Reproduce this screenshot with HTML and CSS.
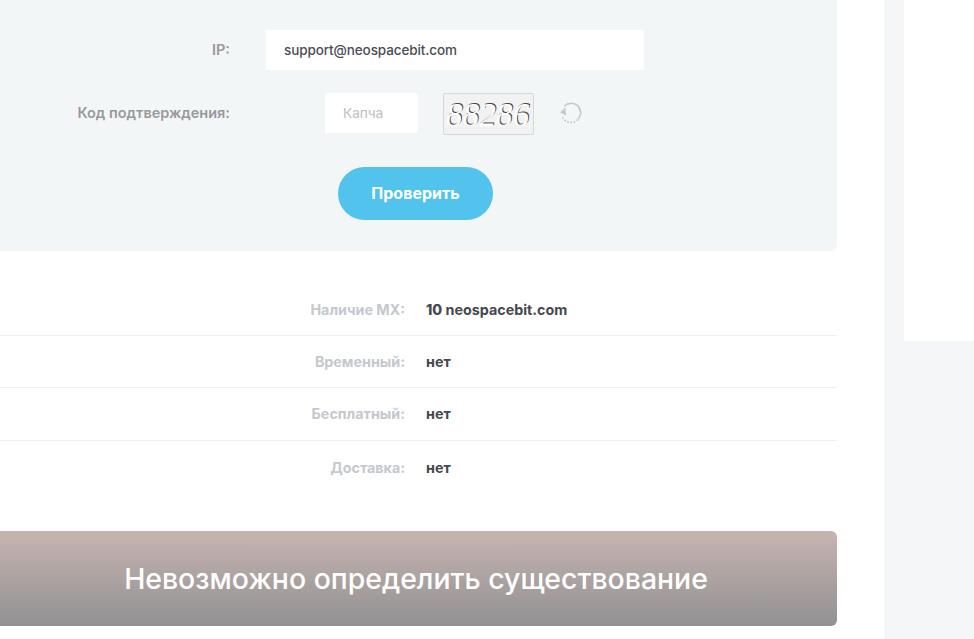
FILE: index.html
```html
<!DOCTYPE html>
<html lang="ru">
<head>
    <meta charset="UTF-8">
    <title>Проверка email</title>
    <link rel="stylesheet" href="styles.css">
</head>
<body>
    <div class="page">
        <main class="content">
            <form class="check-form">
                <div class="form-row">
                    <label class="form-label">IP:</label>
                    <div class="form-field">
                        <input class="text-input ip-input" type="text" value="support@neospacebit.com">
                    </div>
                </div>
                <div class="form-row captcha-row">
                    <label class="form-label">Код подтверждения:</label>
                    <div class="form-field captcha-field">
                        <input class="text-input captcha-input" type="text" placeholder="Капча">
                        <div class="captcha-img"><span>88286</span></div>
                        <svg class="refresh-icon" width="24" height="24" viewBox="0 0 24 24" fill="none">
                            <path d="M5.3 5.2A9.5 9.5 0 1 1 19 18.4" stroke="#c4c8cb" stroke-width="1.6"/>
                            <path d="M18.6 18.8A9.5 9.5 0 0 1 3 15" stroke="#b0b5b8" stroke-width="1.5" stroke-dasharray="1.2 2"/>
                            <path d="M6.2 6.6 1.2 11.6 7 14.6Z" fill="#c4c8cb"/>
                        </svg>
                    </div>
                </div>
                <div class="form-actions">
                    <button class="submit-btn" type="button">Проверить</button>
                </div>
            </form>

            <div class="result-table">
                <div class="result-row">
                    <span class="result-label">Наличие MX:</span>
                    <span class="result-value"><b>10</b> neospacebit.com</span>
                </div>
                <div class="result-row">
                    <span class="result-label">Временный:</span>
                    <span class="result-value">нет</span>
                </div>
                <div class="result-row">
                    <span class="result-label">Бесплатный:</span>
                    <span class="result-value">нет</span>
                </div>
                <div class="result-row">
                    <span class="result-label">Доставка:</span>
                    <span class="result-value">нет</span>
                </div>
            </div>

            <div class="status-banner">Невозможно определить существование</div>
        </main>
        <aside class="sidebar">
            <div class="widget"></div>
        </aside>
    </div>
</body>
</html>
```

FILE: styles.css
```css
html, body {
    margin: 0;
    height: 100%;
}
body {
    font-family: Inter, "Open Sans", sans-serif;
    background-color: #fff;
    overflow: hidden;
}
.page {
    display: flex;
    height: 639px;
}
.content {
    width: 837px;
    padding-right: 48px;
    flex-shrink: 0;
}
.check-form {
    height: 251px;
    box-sizing: border-box;
    padding-top: 30px;
    background-color: #f3f6f7;
    border-bottom-right-radius: 6px;
}
.form-row {
    display: grid;
    grid-template-columns: 230px 378px;
    column-gap: 36px;
    align-items: center;
    margin-bottom: 23px;
}
.form-label {
    padding-bottom: 2px;
    text-align: right;
    font-size: 14.5px;
    font-weight: 600;
    color: #99999b;
}
.text-input {
    box-sizing: border-box;
    height: 40px;
    border: none;
    border-radius: 2px;
    background-color: #fff;
    font-family: inherit;
    font-size: 13.5px;
    font-weight: 500;
    letter-spacing: -0.1px;
    color: #4a4d55;
    outline: none;
}
.ip-input {
    width: 100%;
    padding: 0 18px;
}
.captcha-row {
    margin-bottom: 32px;
}
.captcha-row .form-label {
    padding-bottom: 3px;
}
.captcha-field {
    display: flex;
    align-items: flex-start;
    padding-left: 59px;
}
.captcha-input {
    width: 93px;
    padding: 0 18px;
}
.captcha-input::placeholder {
    color: #c4c6cc;
}
.captcha-img {
    box-sizing: border-box;
    width: 91px;
    height: 42px;
    margin-left: 25px;
    border: 1px solid #d5d8d9;
    border-radius: 2px;
    background-color: #f1f2f1;
    overflow: hidden;
}
.captcha-img span {
    display: block;
    padding-left: 2px;
    font-family: "Liberation Serif", serif;
    font-style: italic;
    font-size: 33px;
    line-height: 42px;
    letter-spacing: 0.2px;
    color: #fff;
    text-shadow: 1px -1px 0 #444;
}
.refresh-icon {
    margin: 8px 0 0 25px;
}
.form-actions {
    padding-left: 338px;
}
.submit-btn {
    display: block;
    width: 155px;
    height: 53px;
    border: none;
    border-radius: 27px;
    background-color: #52c3ec;
    color: #fff;
    font-family: inherit;
    font-size: 16px;
    font-weight: 700;
    padding-bottom: 3px;
    cursor: pointer;
}
.result-table {
    padding-top: 32px;
    margin-bottom: 38px;
}
.result-row {
    display: grid;
    grid-template-columns: 405px 1fr;
    column-gap: 21px;
    align-items: center;
    height: 52.6px;
    box-sizing: border-box;
    border-bottom: 1px solid #f0f0f1;
    font-size: 14.3px;
    font-weight: 700;
}
.result-row:first-child {
    padding-top: 1px;
}
.result-row:last-child {
    border-bottom: none;
}
.result-label {
    text-align: right;
    color: #c5c8cd;
}
.result-value {
    color: #454850;
}
.result-value b {
    font-weight: 800;
}
.status-banner {
    height: 95px;
    line-height: 95px;
    padding-right: 5px;
    border-radius: 0 6px 6px 0;
    background: linear-gradient(#c7b4b1, #919191);
    color: #fff;
    text-align: center;
    font-size: 28.4px;
    font-weight: 500;
}
.sidebar {
    flex: 1;
    padding-left: 18px;
    background-color: #f5f6f8;
    border-left: 1px solid #f0f0f2;
}
.widget {
    height: 341px;
    background-color: #fff;
}
```
